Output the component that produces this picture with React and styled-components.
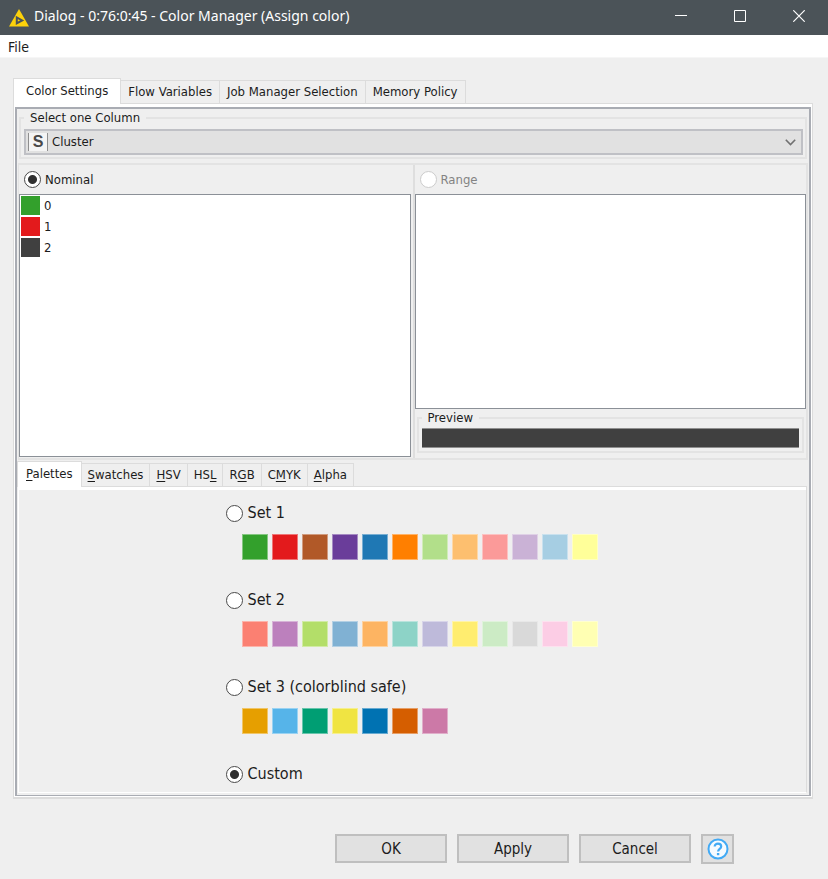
import React, { useState } from "react";
import styled, { createGlobalStyle } from "styled-components";

const uiFont = `"Tahoma", "DejaVu Sans Condensed", "Noto Sans", sans-serif`;
const titleFont = `"Segoe UI", "Noto Sans", "Open Sans", sans-serif`;

const GlobalStyle = createGlobalStyle`
  *, *::before, *::after { box-sizing: border-box; }
  body { margin: 0; background: #efefef; }
  button, input, select { font: inherit; color: inherit; margin: 0; }
`;

const Window = styled.div`
  display: flex;
  flex-direction: column;
  min-height: 100vh;
  background: #efefef;
  color: #1c1c1c;
  font-family: ${uiFont};
  font-size: 13px;
  line-height: 16px;
`;

const TitleBar = styled.header`
  display: flex;
  align-items: center;
  height: 35px;
  padding-left: 9px;
  background: #4b5358;
  color: #ffffff;
  font-family: ${titleFont};
`;

const Title = styled.h1`
  flex: 1;
  margin: 0 0 0 5px;
  padding-bottom: 4px;
  font-size: 14px;
  font-weight: 400;
  line-height: 20px;
  white-space: nowrap;
`;

const CaptionButton = styled.button`
  display: grid;
  place-items: center;
  width: 59px;
  height: 35px;
  padding: 0 0 3px;
  border: 0;
  background: transparent;
`;

const MenuBar = styled.nav`
  display: flex;
  align-items: center;
  height: 23px;
  padding: 0 8px;
  background: #ffffff;
  border-bottom: 1px solid #f6f6f6;
`;

const MenuButton = styled.button`
  padding: 1px 0 0;
  border: 0;
  background: transparent;
  font-size: 14px;
`;

const Main = styled.main`
  flex: 1;
  display: flex;
  flex-direction: column;
  padding: 20px 15px 0 13px;
`;

const TabStrip = styled.div`
  display: flex;
  align-items: flex-end;
`;

const Tab = styled.button`
  height: ${(p) => (p.$active ? 26 : 23)}px;
  margin-bottom: ${(p) => (p.$active ? -1 : 0)}px;
  padding: 0 ${(p) => p.$pad}px ${(p) => (p.$active ? 2 : 0)}px;
  border: solid #dcdcdc;
  border-width: ${(p) => (p.$active ? "1px 1px 0 1px" : "1px 1px 0 0")};
  background: ${(p) => (p.$active ? "#ffffff" : "#efefef")};
  white-space: nowrap;
  position: relative;
`;

const Mnemonic = styled.span`
  text-decoration: underline;
  text-underline-offset: 2px;
`;

const OuterPanel = styled.section`
  flex: 1;
  display: flex;
  flex-direction: column;
  border: 1px solid #dcdcdc;
  border-bottom-width: 2px;
  background: #ffffff;
  padding: 3px 1px 1px;
`;

const Frame = styled.div`
  flex: 1;
  display: flex;
  flex-direction: column;
  border: 2px solid #a9acb3;
  border-bottom-width: 1px;
  background: #efefef;
`;

const Group = styled.fieldset`
  min-width: 0;
  margin: ${(p) => p.$margin};
  padding: ${(p) => p.$padding};
  border: 2px solid #e3e3e3;
`;

const Legend = styled.legend`
  padding: 0 6px;
  line-height: 17px;
`;

const Combo = styled.label`
  display: flex;
  align-items: center;
  height: 26px;
  border: 2px solid #bfc0c5;
  background: #e1e1e1;
  padding: 0 5px 0 2px;
`;

const TypeBadge = styled.span`
  display: grid;
  place-items: center;
  width: 20px;
  height: 18px;
  border: solid #8e8e8e;
  border-width: 0 1px;
  background: #f4f4f4;
  color: #484848;
  font-family: "Liberation Sans", Arial, sans-serif;
  font-size: 16px;
  font-weight: 700;
`;

const ComboSelect = styled.select`
  flex: 1;
  padding: 0 0 0 4px;
  border: 0;
  background: transparent;
  appearance: none;
  outline: 0;
`;

const Split = styled.div`
  display: grid;
  grid-template-columns: 1fr 1fr;
  height: 297px;
  margin: 4px 1px 0 1px;
  border: 2px solid #e3e3e3;
  border-left-width: 1px;
`;

const Pane = styled.div`
  display: flex;
  flex-direction: column;
  min-width: 0;
  padding: ${(p) => (p.$divided ? "0" : "0 2px 1px 0")};
  border-left: ${(p) => (p.$divided ? "2px solid #dedede" : "0")};
`;

const RadioLabel = styled.label`
  display: flex;
  align-items: center;
  gap: ${(p) => (p.$large ? 5 : 4)}px;
  height: ${(p) => (p.$large ? 20 : 29)}px;
  padding-left: ${(p) => (p.$large ? 0 : 5)}px;
  color: ${(p) => (p.$muted ? "#838383" : "inherit")};
  font-size: ${(p) => (p.$large ? 16 : 13)}px;
`;

const Radio = styled.input`
  appearance: none;
  flex: none;
  width: 17px;
  height: 17px;
  border: 1px solid #4a4a4a;
  border-radius: 50%;
  background: #ffffff;
  &:checked {
    background: radial-gradient(circle, #303030 4px, #ffffff 5px);
  }
  &:disabled {
    border-color: #cccccc;
  }
`;

const ValueList = styled.ul`
  flex: 1;
  margin: 0;
  padding: 0 1px;
  border: 1px solid #8b9097;
  background: #ffffff;
  list-style: none;
`;

const ValueItem = styled.li`
  display: flex;
  align-items: center;
  gap: 4px;
  height: 21px;
`;

const Chip = styled.span`
  width: 19px;
  height: 19px;
  background: ${(p) => p.$color};
`;

const PreviewBar = styled.div`
  height: 20px;
  border: 1px solid #8f8f8f;
  border-width: 1px 0;
  background: #404040;
`;

const InnerTabs = styled(TabStrip)`
  margin: 1px 0 0 0;
`;

const PalettePanel = styled.div`
  flex: 1;
  display: flex;
  justify-content: center;
  margin: 0 2px 2px 1px;
  padding: 16px 2px 6px 0;
  border: 1px solid #dcdcdc;
  border-left-color: #ffffff;
  border-bottom-color: #ffffff;
  box-shadow: inset 0 3px #ffffff;
`;

const PaletteList = styled.div`
  display: flex;
  flex-direction: column;
`;

const PaletteGroup = styled.div`
  height: 87px;
  &:last-child { height: 20px; }
`;

const SwatchRow = styled.div`
  display: flex;
  gap: 4px;
  margin: 11px 0 0 16px;
`;

const Swatch = styled.button`
  width: 26px;
  height: 26px;
  padding: 0;
  border: 1px solid #ffffff66;
  background: ${(p) => p.$color};
`;

const Footer = styled.footer`
  display: flex;
  justify-content: flex-end;
  align-items: flex-start;
  gap: 10px;
  padding: 35px 94px 15px 13px;
`;

const ActionButton = styled.button`
  width: 112px;
  height: 29px;
  padding: 0;
  border: 2px solid #bfbfbf;
  background: #e1e1e1;
  font-size: 15px;
`;

const HelpButton = styled(ActionButton)`
  display: grid;
  place-items: center;
  width: 33px;
  height: 30px;
`;

const values = [
  ["0", "#33a02c"],
  ["1", "#e31a1c"],
  ["2", "#404040"],
];

const palettes = [
  ["Set 1", ["#33a02c", "#e31a1c", "#b15928", "#6a3d9a", "#1f78b4", "#ff7f00", "#b2df8a", "#fdbf6f", "#fb9a99", "#cab2d6", "#a6cee3", "#ffff99"]],
  ["Set 2", ["#fb8072", "#bc80bd", "#b3de69", "#80b1d3", "#fdb462", "#8dd3c7", "#bebada", "#ffed6f", "#ccebc5", "#d9d9d9", "#fccde5", "#ffffb3"]],
  ["Set 3 (colorblind safe)", ["#e69f00", "#56b4e9", "#009e73", "#f0e442", "#0072b2", "#d55e00", "#cc79a7"]],
  ["Custom", []],
];

const mainTabs = ["Color Settings", "Flow Variables", "Job Manager Selection", "Memory Policy"];
const modelTabs = [
  ["", "P", "alettes"],
  ["", "S", "watches"],
  ["", "H", "SV"],
  ["HS", "L", ""],
  ["R", "G", "B"],
  ["C", "M", "YK"],
  ["", "A", "lpha"],
];

export default function App() {
  const [palette, setPalette] = useState("Custom");
  return (
    <Window>
      <GlobalStyle />
      <TitleBar>
        <svg width="20" height="18" viewBox="0 0 20 18" aria-hidden="true">
          <path d="M10 0 20 17.5H0Z" fill="#fdd20a" />
          <path d="M7.8 8.4v6l5.4-3Z" fill="#fdd20a" stroke="#4b5358" strokeWidth="2" />
        </svg>
        <Title>Dialog - 0:76:0:45 - Color Manager (Assign color)</Title>
        <CaptionButton aria-label="Minimize">
          <svg width="12" height="12"><path d="M0 5.5H12" stroke="#fff" /></svg>
        </CaptionButton>
        <CaptionButton aria-label="Maximize">
          <svg width="12" height="12"><path d="M.5.5h11v11H.5Z" fill="none" stroke="#fff" /></svg>
        </CaptionButton>
        <CaptionButton aria-label="Close">
          <svg width="12" height="12"><path d="M.3.3 11.7 11.7M11.7.3.3 11.7" stroke="#fff" strokeWidth="1.2" /></svg>
        </CaptionButton>
      </TitleBar>
      <MenuBar><MenuButton>File</MenuButton></MenuBar>
      <Main>
        <TabStrip role="tablist">
          {mainTabs.map((name, i) => (
            <Tab key={name} role="tab" aria-selected={i === 0} $active={i === 0} $pad={i === 0 ? 12 : 7}>{name}</Tab>
          ))}
        </TabStrip>
        <OuterPanel>
          <Frame>
            <Group $margin="0 2px" $padding="3px 2px 2px 3px">
              <Legend>Select one Column</Legend>
              <Combo>
                <TypeBadge aria-hidden="true">S</TypeBadge>
                <ComboSelect aria-label="Column"><option>Cluster</option></ComboSelect>
                <svg width="11" height="7" aria-hidden="true"><path d="M.8.8 5.5 5.5 10.2.8" fill="none" stroke="#707070" strokeWidth="1.6" /></svg>
              </Combo>
            </Group>
            <Split>
              <Pane>
                <RadioLabel><Radio type="radio" name="mode" defaultChecked />Nominal</RadioLabel>
                <ValueList>
                  {values.map(([v, c]) => (
                    <ValueItem key={v}><Chip $color={c} />{v}</ValueItem>
                  ))}
                </ValueList>
              </Pane>
              <Pane $divided>
                <RadioLabel $muted><Radio type="radio" name="mode" disabled />Range</RadioLabel>
                <ValueList />
                <Group $margin="0 2px 5px" $padding="2px 3px 3px">
                  <Legend>Preview</Legend>
                  <PreviewBar />
                </Group>
              </Pane>
            </Split>
            <InnerTabs role="tablist">
              {modelTabs.map(([a, key, b], i) => (
                <Tab key={a + key + b} role="tab" aria-selected={i === 0} $active={i === 0} $pad={i === 0 ? 8 : 6}>
                  {a}<Mnemonic>{key}</Mnemonic>{b}
                </Tab>
              ))}
            </InnerTabs>
            <PalettePanel role="tabpanel">
              <PaletteList>
                {palettes.map(([name, colors]) => (
                  <PaletteGroup key={name}>
                    <RadioLabel $large>
                      <Radio type="radio" name="palette" checked={palette === name} onChange={() => setPalette(name)} />
                      {name}
                    </RadioLabel>
                    {colors.length > 0 && (
                      <SwatchRow>
                        {colors.map((c) => <Swatch key={c} $color={c} aria-label={c} />)}
                      </SwatchRow>
                    )}
                  </PaletteGroup>
                ))}
              </PaletteList>
            </PalettePanel>
          </Frame>
        </OuterPanel>
      </Main>
      <Footer>
        <ActionButton>OK</ActionButton>
        <ActionButton>Apply</ActionButton>
        <ActionButton>Cancel</ActionButton>
        <HelpButton aria-label="Help">
          <svg width="22" height="22" viewBox="0 0 22 22" fill="none" stroke="#42aaf5">
            <circle cx="11" cy="11" r="9.5" fill="#f6fbff" strokeWidth="2" />
            <path d="M7.7 8.6C7.7 4.6 14.2 4.8 14.2 8.5c0 2.4-3.1 2.5-3.1 5" strokeWidth="2.2" />
            <path d="M11.1 15v2.2" strokeWidth="2.4" />
          </svg>
        </HelpButton>
      </Footer>
    </Window>
  );
}
